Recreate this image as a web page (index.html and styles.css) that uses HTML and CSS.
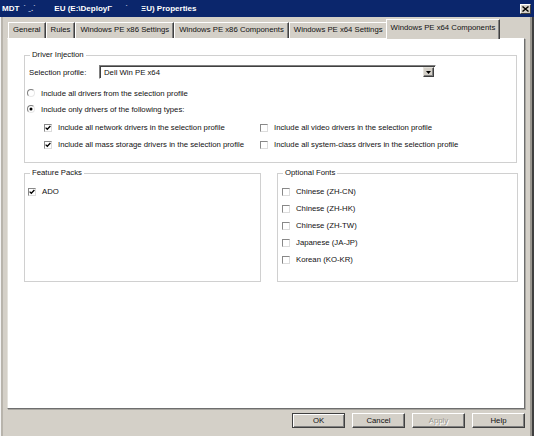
FILE: index.html
```html
<!DOCTYPE html>
<html>
<head>
<meta charset="utf-8">
<title>Properties</title>
<link rel="stylesheet" href="styles.css">
</head>
<body>
<div class="window">
  <div class="titlebar">
    <div class="title"><span>MDT</span><span class="redact">˙ ˍ.˙</span><span class="t3">EU (E:\DeployΓ</span><span class="redact2">˙</span><span class="t5">ΞU) Properties</span></div>
    <div class="close"><svg width="7" height="6" viewBox="0 0 7 6"><path d="M0.5 0.5 L6.5 5.5 M6.5 0.5 L0.5 5.5" stroke="#000" stroke-width="1.4" fill="none"/></svg></div>
  </div>
  <div class="main">
    <div class="tabs">
      <div class="tab">General</div>
      <div class="tab">Rules</div>
      <div class="tab">Windows PE x86 Settings</div>
      <div class="tab">Windows PE x86 Components</div>
      <div class="tab">Windows PE x64 Settings</div>
      <div class="tab active">Windows PE x64 Components</div>
    </div>
    <div class="page">
      <fieldset class="group inj">
        <legend>Driver Injection</legend>
        <div class="profile-row">
          <span class="lbl">Selection profile:</span>
          <div class="combo">
            <span class="val">Dell Win PE x64</span>
            <span class="drop"><svg width="5" height="3" viewBox="0 0 5 3"><path d="M0 0 H5 L2.5 3 Z" fill="#000"/></svg></span>
          </div>
        </div>
        <div class="opt"><span class="rb"></span>Include all drivers from the selection profile</div>
        <div class="opt"><span class="rb on"></span>Include only drivers of the following types:</div>
        <div class="types">
          <div class="opt tall"><span class="cb on"><svg width="6" height="6" viewBox="0 0 6 6"><path d="M0.6 2.6 L2.3 4.3 L5.4 1" stroke="#000" stroke-width="1.3" fill="none"/></svg></span>Include all network drivers in the selection profile</div>
          <div class="opt tall"><span class="cb"></span>Include all video drivers in the selection profile</div>
          <div class="opt tall"><span class="cb on"><svg width="6" height="6" viewBox="0 0 6 6"><path d="M0.6 2.6 L2.3 4.3 L5.4 1" stroke="#000" stroke-width="1.3" fill="none"/></svg></span>Include all mass storage drivers in the selection profile</div>
          <div class="opt tall"><span class="cb"></span>Include all system-class drivers in the selection profile</div>
        </div>
      </fieldset>
      <div class="cols">
        <fieldset class="group fp">
          <legend>Feature Packs</legend>
          <div class="opt tall"><span class="cb on"><svg width="6" height="6" viewBox="0 0 6 6"><path d="M0.6 2.6 L2.3 4.3 L5.4 1" stroke="#000" stroke-width="1.3" fill="none"/></svg></span>ADO</div>
        </fieldset>
        <fieldset class="group of">
          <legend>Optional Fonts</legend>
          <div class="opt tall"><span class="cb"></span>Chinese (ZH-CN)</div>
          <div class="opt tall"><span class="cb"></span>Chinese (ZH-HK)</div>
          <div class="opt tall"><span class="cb"></span>Chinese (ZH-TW)</div>
          <div class="opt tall"><span class="cb"></span>Japanese (JA-JP)</div>
          <div class="opt tall"><span class="cb"></span>Korean (KO-KR)</div>
        </fieldset>
      </div>
    </div>
    <div class="buttons">
      <div class="btn default">OK</div>
      <div class="btn">Cancel</div>
      <div class="btn disabled">Apply</div>
      <div class="btn">Help</div>
    </div>
  </div>
</div>
</body>
</html>
```
FILE: styles.css
```css
* { box-sizing: border-box; }
html, body { margin: 0; padding: 0; }
body {
  width: 534px;
  height: 436px;
  overflow: hidden;
  background: #d4d0c8;
  font-family: "Liberation Sans", Arial, sans-serif;
  font-size: 7.75px;
  color: #111;
}
.window {
  width: 534px;
  height: 436px;
  background: #d4d0c8;
  display: flex;
  flex-direction: column;
  box-shadow: inset 1px 0 #f4f4f4, inset 3px 0 #b8b4ac, inset -2px 0 #404040, inset -4px 0 #9a9790;
}
.titlebar {
  height: 17px;
  flex: none;
  background: #0b266c;
  display: flex;
  align-items: center;
  justify-content: space-between;
  padding: 0 3px 0 2px;
  color: #fff;
  font-weight: bold;
  font-size: 8px;
}
.title { display: flex; white-space: pre; }
.redact { margin-left: 4px; width: 31px; color: #c8cce0; }
.redact2 { width: 29px; text-align: center; color: #c8cce0; }
.close {
  width: 11px;
  height: 10px;
  background: #d4d0c8;
  border: 1px solid;
  border-color: #fff #404040 #404040 #fff;
  display: flex;
  align-items: center;
  justify-content: center;
}
.main {
  flex: 1;
  display: flex;
  flex-direction: column;
  padding: 2px 9px 0 7px;
}
.tabs {
  display: flex;
  align-items: flex-end;
  height: 19px;
  flex: none;
  padding-left: 1px;
}
.tab {
  height: 16px;
  line-height: 14px;
  padding: 0 4px;
  border: 1px solid;
  border-bottom: none;
  border-color: #fff #404040 transparent #fff;
  box-shadow: inset -1px 0 #808080;
  background: #d4d0c8;
  white-space: nowrap;
}
.tab.active {
  position: relative;
  height: 20px;
  line-height: 16px;
  margin: 0 -2px -1px -2px;
  padding: 0 4px;
}
.page {
  height: 371px;
  flex: none;
  background: #fff;
  border: 1px solid;
  border-color: #fff #6e6e6e #6e6e6e #e4e2dc;
  box-shadow: 1px 1px 0 #a8a6a0;
  padding: 11px 7px 0 16px;
}
.group {
  margin: 0;
  min-width: 0;
  border: 1px solid #d0d0d0;
}
.group legend {
  padding: 0 2px;
  line-height: 10px;
  height: 10px;
}
.inj { padding: 5px 0 9px 2px; }
.inj legend { margin-left: 3px; }
.profile-row { display: flex; align-items: center; height: 14px; margin-bottom: 6px; }
.lbl { width: 72px; padding-left: 2px; flex: none; }
.combo {
  width: 337px;
  height: 14px;
  display: flex;
  align-items: center;
  justify-content: space-between;
  border: 1px solid;
  border-color: #808080 #fff #fff #808080;
  box-shadow: inset 1px 1px #404040;
  background: #fff;
  padding: 1px 1px 1px 4px;
}
.drop {
  width: 11px;
  height: 10px;
  background: #d4d0c8;
  border: 1px solid;
  border-color: #e4e2dc #404040 #404040 #e4e2dc;
  box-shadow: inset -1px -1px #808080;
  display: flex;
  align-items: center;
  justify-content: center;
}
.opt { display: flex; align-items: center; height: 16px; white-space: nowrap; }
.opt.tall { height: 17px; }
.rb {
  width: 8px;
  height: 8px;
  flex: none;
  margin-right: 6px;
  border-radius: 50%;
  background: #fff;
  border: 1px solid;
  border-color: #808080 #e8e8e8 #e8e8e8 #808080;
  display: flex;
  align-items: center;
  justify-content: center;
}
.rb.on::after {
  content: "";
  width: 2px;
  height: 2px;
  border-radius: 50%;
  background: #000;
  box-shadow: 0 0 0 0.5px #000;
}
.cb {
  width: 8px;
  height: 8px;
  flex: none;
  margin-right: 6px;
  background: #fff;
  border: 1px solid;
  border-color: #888 #dcdcdc #dcdcdc #888;
  display: flex;
  align-items: center;
  justify-content: center;
}
.types {
  display: grid;
  grid-template-columns: 216px 1fr;
  margin: 2px 0 0 17px;
}
.cols {
  display: grid;
  grid-template-columns: 237px 241px;
  column-gap: 16px;
  margin-top: 5px;
}
.cols .group { height: 114px; padding-top: 5px; }
.fp { padding-left: 3px; }
.fp legend { margin-left: 2px; }
.of { padding-left: 4px; }
.of legend { margin-left: 1px; }
.buttons {
  display: flex;
  justify-content: flex-end;
  gap: 7px;
  padding-top: 4px;
}
.btn {
  width: 53px;
  height: 15px;
  display: flex;
  align-items: center;
  justify-content: center;
  background: #d4d0c8;
  border: 1px solid;
  border-color: #fff #404040 #404040 #fff;
  box-shadow: inset -1px -1px #808080;
}
.btn.default {
  border-color: #404040;
  box-shadow: inset 1px 1px #fff, inset -1px -1px #808080;
}
.btn.disabled { color: #9a9890; text-shadow: 1px 1px #fff; }
```
